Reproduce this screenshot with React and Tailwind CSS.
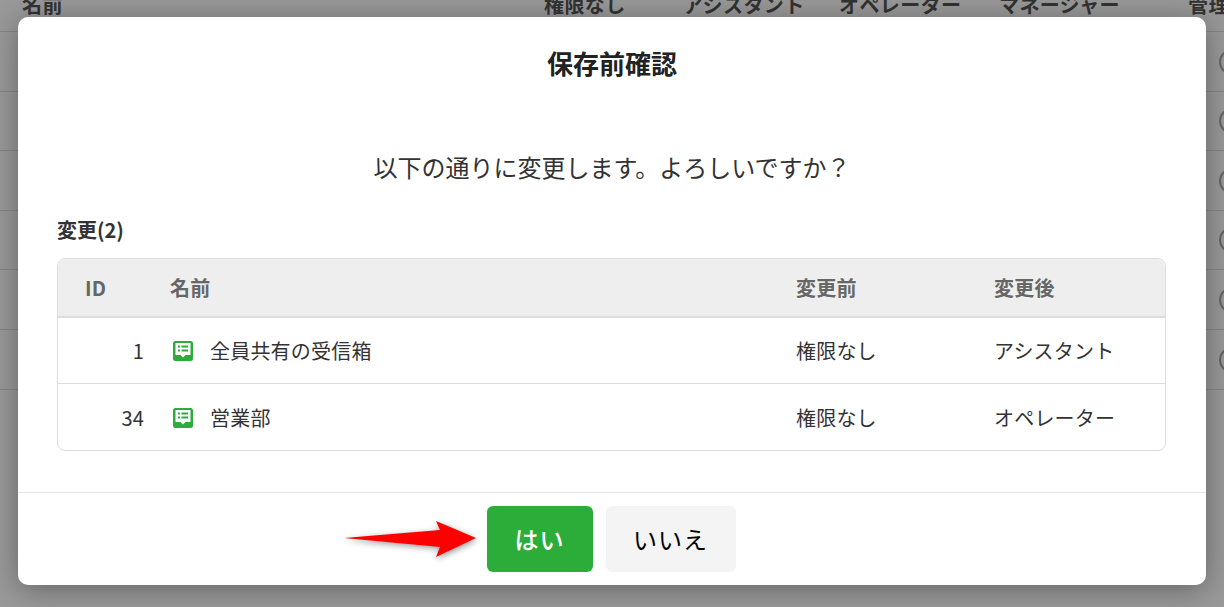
const font = { fontFamily: '"Noto Sans CJK JP", "Noto Sans", sans-serif' };

const rowHeights = [60, 59, 60, 59, 60, 60];

function Background() {
  return (
    <div className="h-[607px] overflow-hidden bg-white">
      <div className="flex h-[32px] items-end whitespace-nowrap border-b border-[#ddd] pb-[13px] text-[20px] font-bold leading-[26px] tracking-[0.4px] text-[#555]">
        <span className="ml-[22px] w-[522px] shrink-0">名前</span>
        <span className="w-[139px] shrink-0">権限なし</span>
        <span className="w-[156px] shrink-0">アシスタント</span>
        <span className="w-[160px] shrink-0">オペレーター</span>
        <span className="w-[189px] shrink-0">マネージャー</span>
        <span className="shrink-0">管理者</span>
      </div>
      {rowHeights.map((h, i) => (
        <div key={i} className="flex items-center justify-end border-b border-[#ddd]" style={{ height: h }}>
          <div className="mr-[-21px] size-[26px] rounded-full border-2 border-[#aaa]" />
        </div>
      ))}
    </div>
  );
}

function InboxIcon() {
  return (
    <svg width="20" height="20" viewBox="0 0 20 20" className="shrink-0">
      <rect width="20" height="20" rx="2.5" fill="#2cad3a" />
      <path d="M2.5 2h15v12h-5L10 16.5 7.5 14h-5z" fill="#fff" />
      <path d="M5 4.5h2v2H5zM8.5 4.5H15v2H8.5zM5 8.5h2v2H5zM8.5 8.5H15v2H8.5z" fill="#2cad3a" />
    </svg>
  );
}

function Row({ id, name, before, after, last }) {
  return (
    <div className={`flex h-[66px] items-center pt-[1px] text-[20px] tracking-[0.2px] text-[#333] ${last ? "" : "border-b border-[#ddd]"}`}>
      <span className="w-[86px] text-right">{id}</span>
      <span className="ml-[29px] flex w-[623px] items-center gap-[17px]">
        <InboxIcon />
        {name}
      </span>
      <span className="w-[198px]">{before}</span>
      <span className="whitespace-nowrap">{after}</span>
    </div>
  );
}

export default function App() {
  return (
    <div className="relative h-[607px] w-[1224px] overflow-hidden" style={font}>
      <Background />
      <div className="absolute inset-0 bg-black/40" />
      <div className="absolute left-[18px] top-[17px] flex h-[568px] w-[1188px] flex-col rounded-[10px] bg-white shadow-[0_4px_30px_rgba(0,0,0,0.35)]">
        <h2 className="mt-[28px] text-center text-[26px] font-bold leading-[36px] text-[#222]">保存前確認</h2>
        <p className="mt-[70px] text-center text-[24px] leading-[32px] text-[#333]">
          以下の通りに変更します。よろしいですか？
        </p>
        <div className="mt-[34px] pl-[39px] pr-[40px]">
          <p className="text-[20px] font-bold leading-[26px] text-[#333]">変更(2)</p>
          <div className="mt-[15px] overflow-hidden rounded-[8px] border border-[#ddd]">
            <div className="flex h-[59px] items-center border-b-2 border-[#ddd] bg-[#eee] text-[20px] font-bold tracking-[0.2px] text-[#666]">
              <span className="ml-[27px] w-[85px]">ID</span>
              <span className="w-[626px]">名前</span>
              <span className="w-[198px]">変更前</span>
              <span>変更後</span>
            </div>
            <Row id="1" name="全員共有の受信箱" before="権限なし" after="アシスタント" />
            <Row id="34" name="営業部" before="権限なし" after="オペレーター" last />
          </div>
        </div>
        <div className="relative mt-auto flex h-[93px] items-center justify-center gap-[13px] border-t border-[#e5e5e5] pr-[2px]">
          <svg width="134" height="40" viewBox="0 0 134 40" className="absolute left-[326px] top-[26px] drop-shadow-[1px_2px_3px_rgba(0,0,0,0.4)]">
            <path d="M0 19 L96 11 L92 2 L132 19 L92 38 L96 28 Z" fill="#ff0000" />
          </svg>
          <button className="h-[66px] w-[106px] rounded-[6px] bg-[#2cad3a] text-[24px] font-medium tracking-[1px] text-white">はい</button>
          <button className="h-[66px] w-[130px] rounded-[6px] bg-[#f4f4f4] text-[24px] tracking-[1px] text-black">いいえ</button>
        </div>
      </div>
    </div>
  );
}
